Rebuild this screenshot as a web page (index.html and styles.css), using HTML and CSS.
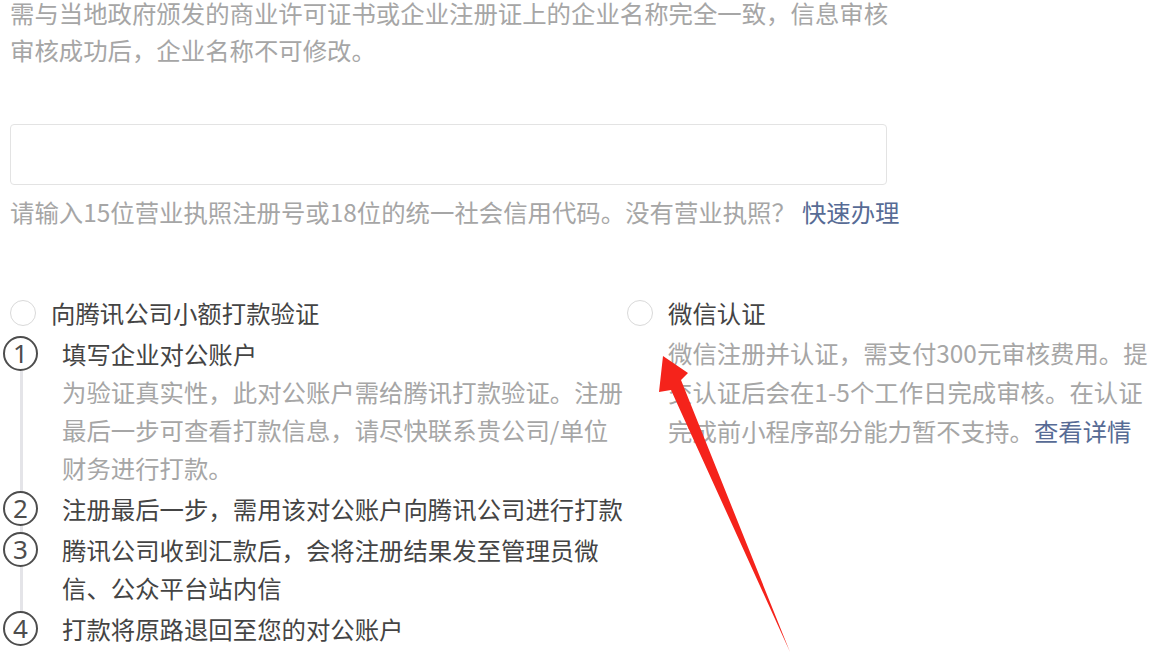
FILE: index.html
```html
<!DOCTYPE html>
<html lang="zh-CN">

<head>
    <meta charset="UTF-8">
    <meta name="viewport" content="width=device-width, initial-scale=1.0">
    <title>小程序主体信息登记</title>
    <link rel="stylesheet" href="styles.css">
</head>

<body>

    <div class="page">
        <p class="intro">需与当地政府颁发的商业许可证书或企业注册证上的企业名称完全一致，信息审核审核成功后，企业名称不可修改。</p>

        <div class="field">
            <input class="field-input" type="text">
        </div>
        <p class="hint">请输入15位营业执照注册号或18位的统一社会信用代码。没有营业执照？<a class="link" href="#">快速办理</a></p>

        <div class="options">
            <div class="option option-left">
                <label class="radio-row">
                    <span class="radio"></span>
                    <span class="radio-label">向腾讯公司小额打款验证</span>
                </label>
                <ol class="steps">
                    <li class="step">
                        <span class="step-num">1</span>
                        <div class="step-body">
                            <div class="step-title">填写企业对公账户</div>
                            <div class="step-desc">为验证真实性，此对公账户需给腾讯打款验证。注册最后一步可查看打款信息，请尽快联系贵公司/单位财务进行打款。</div>
                        </div>
                    </li>
                    <li class="step">
                        <span class="step-num">2</span>
                        <div class="step-body">
                            <div class="step-title">注册最后一步，需用该对公账户向腾讯公司进行打款</div>
                        </div>
                    </li>
                    <li class="step">
                        <span class="step-num">3</span>
                        <div class="step-body">
                            <div class="step-title">腾讯公司收到汇款后，会将注册结果发至管理员微信、公众平台站内信</div>
                        </div>
                    </li>
                    <li class="step">
                        <span class="step-num">4</span>
                        <div class="step-body">
                            <div class="step-title">打款将原路退回至您的对公账户</div>
                        </div>
                    </li>
                </ol>
            </div>

            <div class="option option-right">
                <label class="radio-row">
                    <span class="radio"></span>
                    <span class="radio-label">微信认证</span>
                </label>
                <p class="option-desc">微信注册并认证，需支付300元审核费用。提交认证后会在1-5个工作日完成审核。在认证完成前小程序部分能力暂不支持。<a class="link" href="#">查看详情</a></p>
            </div>
        </div>

        <!-- red annotation arrow drawn over the screenshot -->
        <svg class="arrow" width="1157" height="672" viewBox="0 0 1157 672">
            <polygon points="663,362 688,379 681,386 790,658 671,396 659,398" fill="#f5231b" />
        </svg>
    </div>

</body>

</html>
```

FILE: styles.css
```css
html,
body {
    margin: 0;
    padding: 0;
    background-color: #fff;
}

body {
    font-family: "Noto Sans CJK SC", "Noto Sans", "Liberation Sans", sans-serif;
    font-size: 24.4px;
    color: #444;
    overflow: hidden;
}

.page {
    position: relative;
    width: 1157px;
    height: 672px;
    padding-left: 10px;
    box-sizing: border-box;
}

.intro {
    width: 890px;
    margin: -6px 0 0 0;
    line-height: 37px;
    color: #a6a6a6;
}

.field {
    margin-top: 56px;
    width: 877px;
}

.field-input {
    display: block;
    width: 100%;
    height: 61px;
    box-sizing: border-box;
    border: 1px solid #e3e3e3;
    border-radius: 4px;
    outline: 0;
    font-size: 24px;
}

.hint {
    margin: 8px 0 0 0;
    line-height: 38px;
    color: #a6a6a6;
}

.link {
    color: #576b95;
    text-decoration: none;
}

.hint .link {
    margin-left: 6px;
}

.options {
    display: flex;
    margin-top: 63px;
}

.option-left {
    width: 617px;
}

.option-right {
    width: 530px;
}

.radio-row {
    display: flex;
    align-items: center;
    height: 38px;
    line-height: 38px;
}

.radio {
    width: 24px;
    height: 24px;
    border: 1px solid #d9d9d9;
    border-radius: 50%;
    margin-right: 15px;
}

.radio-label {
    color: #444;
}

.steps {
    position: relative;
    list-style: none;
    margin: 3px 0 0 -7px;
    padding: 0;
}

.steps::before {
    content: "";
    position: absolute;
    left: 17px;
    top: 36px;
    bottom: 30px;
    width: 3px;
    background-color: #e4e4e8;
}

.step {
    display: flex;
    margin-bottom: 3px;
}

.step-num {
    position: relative;
    flex: none;
    width: 35px;
    height: 35px;
    margin-top: 1px;
    border: 2px solid #4d4d4d;
    border-radius: 50%;
    background-color: #fff;
    box-sizing: border-box;
    text-align: center;
    line-height: 31px;
    font-family: "Noto Sans", "Liberation Sans", sans-serif;
    font-size: 26px;
    color: #4d4d4d;
}

.step-body {
    width: 570px;
    margin-left: 24px;
    line-height: 38px;
}

.step-title {
    color: #444;
}

.step-desc {
    color: #a6a6a6;
}

.option-desc {
    width: 495px;
    margin: 1px 0 0 41px;
    line-height: 39px;
    color: #a6a6a6;
}

.arrow {
    position: absolute;
    left: 0;
    top: 0;
    pointer-events: none;
}
```
